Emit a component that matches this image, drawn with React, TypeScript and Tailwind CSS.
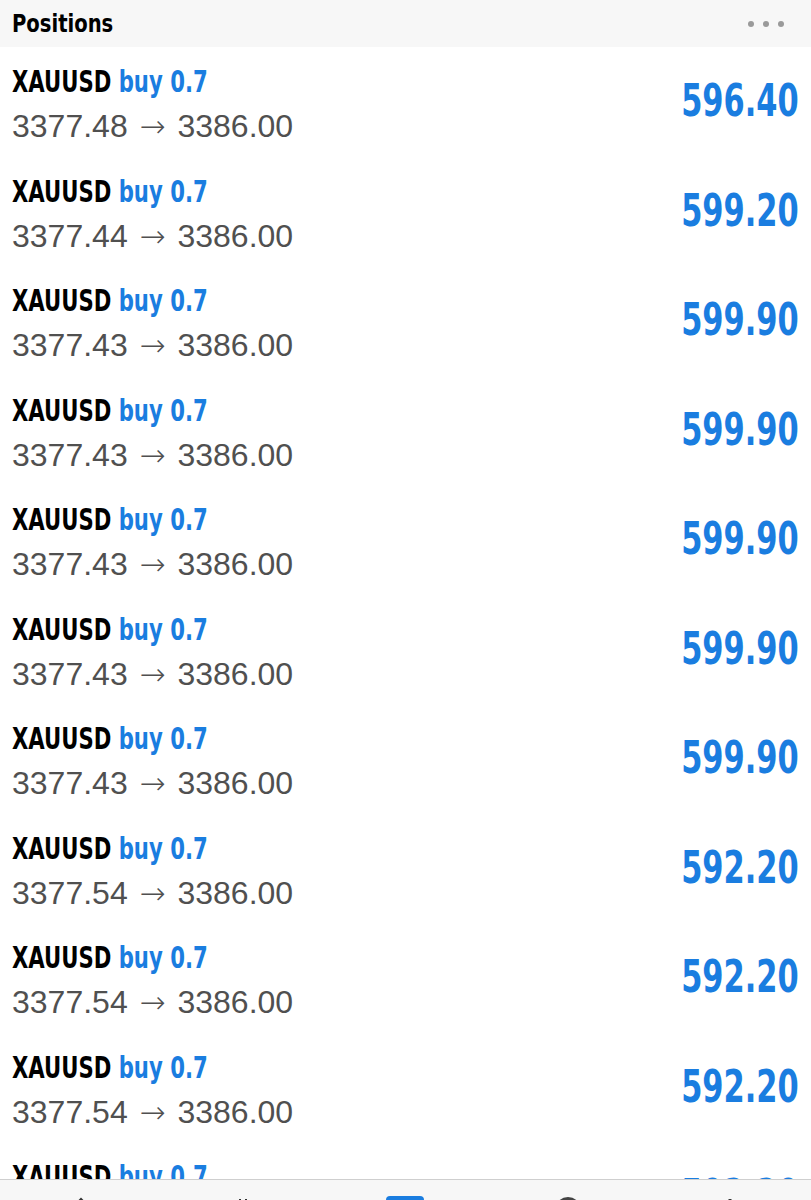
const narrow = "font-['DejaVu_Sans_Condensed','DejaVu_Sans',sans-serif]";

const positions = [
  { open: "3377.48", profit: "596.40" },
  { open: "3377.44", profit: "599.20" },
  { open: "3377.43", profit: "599.90" },
  { open: "3377.43", profit: "599.90" },
  { open: "3377.43", profit: "599.90" },
  { open: "3377.43", profit: "599.90" },
  { open: "3377.43", profit: "599.90" },
  { open: "3377.54", profit: "592.20" },
  { open: "3377.54", profit: "592.20" },
  { open: "3377.54", profit: "592.20" },
  { open: "3377.54", profit: "592.20" },
];

function PositionRow({ open, profit }: { open: string; profit: string }) {
  return (
    <div className="h-[109.5px] shrink-0 flex justify-between px-3 bg-white">
      <div className="flex flex-col">
        <div className={`${narrow} pt-[16px] text-[31px] leading-[37px] font-bold whitespace-nowrap origin-left scale-x-[0.76]`}>
          <span className="text-black">XAUUSD</span>{" "}
          <span className="text-[#1a7de0]">buy 0.7</span>
        </div>
        <div className="mt-[6px] font-['Liberation_Sans',sans-serif] text-[32px] leading-[40px] text-[#505050] whitespace-nowrap">
          {open}{" "}
          <span className="px-[3px] font-['DejaVu_Sans',sans-serif] font-extralight text-[31px]">→</span>
          {" "}3386.00
        </div>
      </div>
      <div className={`${narrow} pt-[30px] text-[44px] leading-[48px] font-bold text-[#1a7de0] origin-right scale-x-[0.77]`}>
        {profit}
      </div>
    </div>
  );
}

export default function App() {
  return (
    <div className="w-[811px] h-[1200px] flex flex-col bg-white overflow-hidden">
      <div className="h-[47px] shrink-0 flex items-center justify-between px-3 bg-[#f7f7f7]">
        <span className={`${narrow} text-[25px] leading-[30px] font-bold text-black origin-left scale-x-[0.87]`}>Positions</span>
        <div className="flex gap-[9px] pr-[15px]">
          <span className="w-[6px] h-[6px] rounded-full bg-[#9a9a9a]" />
          <span className="w-[6px] h-[6px] rounded-full bg-[#9a9a9a]" />
          <span className="w-[6px] h-[6px] rounded-full bg-[#9a9a9a]" />
        </div>
      </div>

      <div className="flex-1 flex flex-col overflow-hidden">
        {positions.map((p, i) => (
          <PositionRow key={i} open={p.open} profit={p.profit} />
        ))}
      </div>

      <div className="h-[21px] shrink-0 grid grid-cols-5 border-t border-[#cfcfcf] bg-[#f7f7f7] overflow-hidden">
        <div className="flex justify-center pt-[17px]">
          <svg width="24" height="24" viewBox="0 0 24 24" fill="none" stroke="#333" strokeWidth="2">
            <path d="M12 2v20M8 6l4-4 4 4" />
          </svg>
        </div>
        <div className="flex justify-center pt-[17px]">
          <svg width="24" height="24" viewBox="0 0 24 24" fill="none" stroke="#333" strokeWidth="2">
            <path d="M9 2v20M15 2v20" />
          </svg>
        </div>
        <div className="flex justify-center pt-[16px]">
          <div className="w-[38px] h-[30px] rounded-[4px] bg-[#1a7de0]" />
        </div>
        <div className="flex justify-center pt-[17px]">
          <div className="w-[26px] h-[26px] rounded-full border-[3px] border-[#444]" />
        </div>
        <div className="flex justify-center pt-[17px]">
          <svg width="24" height="24" viewBox="0 0 24 24" fill="none" stroke="#333" strokeWidth="3">
            <path d="M12 2v20" />
          </svg>
        </div>
      </div>
    </div>
  );
}
